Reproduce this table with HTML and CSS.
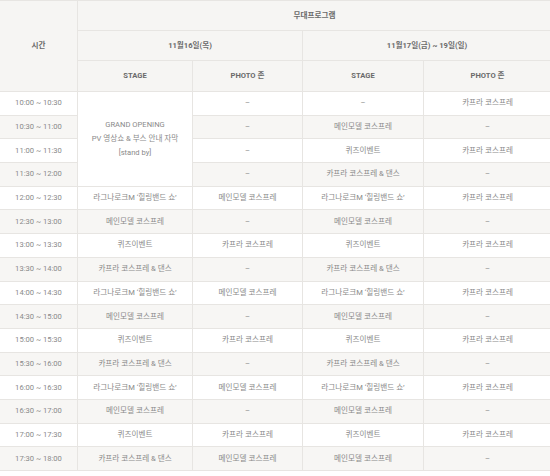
FILE: index.html
```html
<!DOCTYPE html>
<html lang="ko">
<head>
<meta charset="utf-8">
<link rel="stylesheet" href="styles.css">
</head>
<body>
<table class="schedule">
  <colgroup>
    <col class="c-time"><col class="c-s1"><col class="c-p1"><col class="c-s2"><col class="c-p2">
  </colgroup>
  <thead>
    <tr class="h1">
      <th rowspan="3" class="time-head">시간</th>
      <th colspan="4">무대프로그램</th>
    </tr>
    <tr class="h2">
      <th colspan="2">11월16일(목)</th>
      <th colspan="2">11월17일(금) ~ 19일(일)</th>
    </tr>
    <tr class="h3">
      <th>STAGE</th><th>PHOTO 존</th><th>STAGE</th><th>PHOTO 존</th>
    </tr>
  </thead>
  <tbody>
    <tr><td>10:00 ~ 10:30</td><td rowspan="4" class="opening">GRAND OPENING<br>PV 영상쇼 &amp; 부스 안내 자막<br>[stand by]</td><td>–</td><td>–</td><td>카프라 코스프레</td></tr>
    <tr class="alt"><td>10:30 ~ 11:00</td><td>–</td><td>메인모델 코스프레</td><td>–</td></tr>
    <tr><td>11:00 ~ 11:30</td><td>–</td><td>퀴즈이벤트</td><td>카프라 코스프레</td></tr>
    <tr class="alt"><td>11:30 ~ 12:00</td><td>–</td><td>카프라 코스프레 &amp; 댄스</td><td>–</td></tr>
    <tr><td>12:00 ~ 12:30</td><td>라그나로크M ‘힐링밴드 쇼’</td><td>메인모델 코스프레</td><td>라그나로크M ‘힐링밴드 쇼’</td><td>카프라 코스프레</td></tr>
    <tr class="alt"><td>12:30 ~ 13:00</td><td>메인모델 코스프레</td><td>–</td><td>메인모델 코스프레</td><td>–</td></tr>
    <tr><td>13:00 ~ 13:30</td><td>퀴즈이벤트</td><td>카프라 코스프레</td><td>퀴즈이벤트</td><td>카프라 코스프레</td></tr>
    <tr class="alt"><td>13:30 ~ 14:00</td><td>카프라 코스프레 &amp; 댄스</td><td>–</td><td>카프라 코스프레 &amp; 댄스</td><td>–</td></tr>
    <tr><td>14:00 ~ 14:30</td><td>라그나로크M ‘힐링밴드 쇼’</td><td>메인모델 코스프레</td><td>라그나로크M ‘힐링밴드 쇼’</td><td>카프라 코스프레</td></tr>
    <tr class="alt"><td>14:30 ~ 15:00</td><td>메인모델 코스프레</td><td>–</td><td>메인모델 코스프레</td><td>–</td></tr>
    <tr><td>15:00 ~ 15:30</td><td>퀴즈이벤트</td><td>카프라 코스프레</td><td>퀴즈이벤트</td><td>카프라 코스프레</td></tr>
    <tr class="alt"><td>15:30 ~ 16:00</td><td>카프라 코스프레 &amp; 댄스</td><td>–</td><td>카프라 코스프레 &amp; 댄스</td><td>–</td></tr>
    <tr><td>16:00 ~ 16:30</td><td>라그나로크M ‘힐링밴드 쇼’</td><td>메인모델 코스프레</td><td>라그나로크M ‘힐링밴드 쇼’</td><td>카프라 코스프레</td></tr>
    <tr class="alt"><td>16:30 ~ 17:00</td><td>메인모델 코스프레</td><td>–</td><td>메인모델 코스프레</td><td>–</td></tr>
    <tr><td>17:00 ~ 17:30</td><td>퀴즈이벤트</td><td>카프라 코스프레</td><td>퀴즈이벤트</td><td>카프라 코스프레</td></tr>
    <tr class="alt"><td>17:30 ~ 18:00</td><td>카프라 코스프레 &amp; 댄스</td><td>메인모델 코스프레</td><td>메인모델 코스프레</td><td>–</td></tr>
  </tbody>
</table>
</body>
</html>
```

FILE: styles.css
```css
html, body {
  margin: 0;
  padding: 0;
  background: #ffffff;
}

.schedule {
  width: 552px;
  margin-left: -1px;
  border-collapse: collapse;
  table-layout: fixed;
  font-family: Roboto, "Noto Sans CJK KR", sans-serif;
  font-size: 7.6px;
  color: #8a8a8a;
}

.c-time { width: 78px; }
.c-s1 { width: 115px; }
.c-p1 { width: 110px; }
.c-s2 { width: 121px; }
.c-p2 { width: 128px; }

.schedule th,
.schedule td {
  border: 1px solid #e7e5e2;
  text-align: center;
  vertical-align: middle;
  padding: 0;
  line-height: 14px;
}

.schedule th {
  background: #f6f5f3;
  color: #6a6a6a;
  font-weight: 700;
}

.time-head {
  font-weight: 700;
}

.h1, .h2 { height: 30px; }
.h3 { height: 31px; }

.schedule tbody tr { height: 23.7px; }

.schedule tbody tr.alt td {
  background: #f7f6f4;
}

.schedule tbody td.opening {
  background: #ffffff;
  line-height: 14px;
}
```
